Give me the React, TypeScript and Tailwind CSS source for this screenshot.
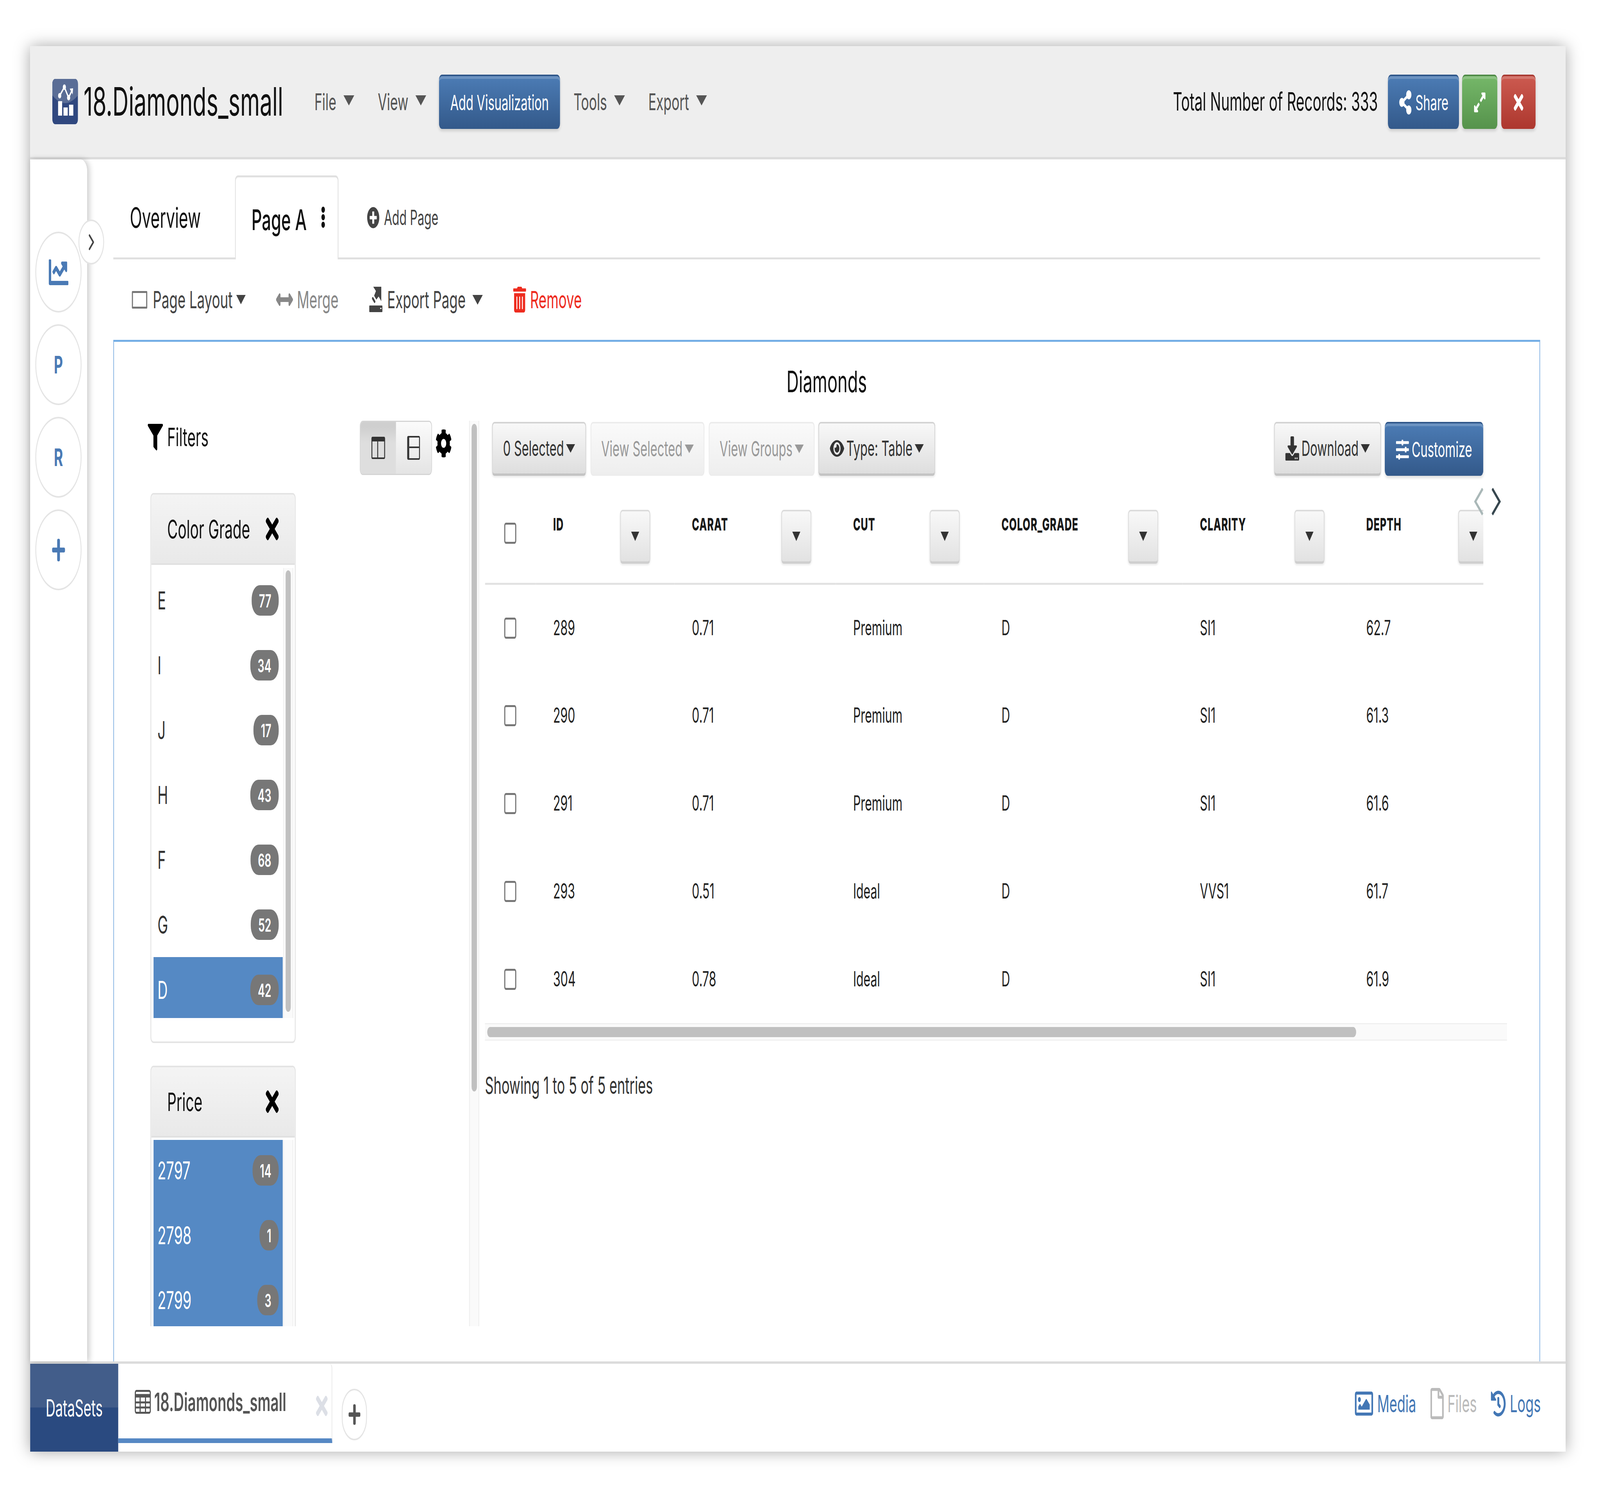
import React, { useState } from "react";
import { ChevronRight } from "lucide-react";
import {
  FaChartLine,
  FaCog,
  FaDownload,
  FaEllipsisV,
  FaEye,
  FaFilter,
  FaHistory,
  FaPlus,
  FaPlusCircle,
  FaRegFile,
  FaRegImage,
  FaShareAlt,
  FaSlidersH,
  FaTimes,
  FaTrashAlt,
  FaExpandAlt,
  FaArrowsAltH,
} from "react-icons/fa";

const font = "font-['Inter','Liberation_Sans',sans-serif]";

function Caret({ className }: { className: string }) {
  return <span className={`inline-block h-0 w-0 border-x-transparent border-t-current ${className}`} />;
}

function Logo() {
  return (
    <svg viewBox="0 0 115 116" className="h-[116px] w-[115px] shrink-0">
      <rect width="115" height="116" rx="13" fill="#30487f" />
      <path d="M0 42 Q57 82 115 42 V13 A13 13 0 0 0 102 0 H13 A13 13 0 0 0 0 13Z" fill="#5a6d96" />
      <path d="M33 43 L54 21 L73 48 L90 27" fill="none" stroke="#fff" strokeWidth="5" />
      <circle cx="33" cy="43" r="7" fill="#fff" />
      <circle cx="54" cy="21" r="7" fill="#fff" />
      <circle cx="73" cy="48" r="7" fill="#fff" />
      <path d="M78 25 L93 24 L91 40Z" fill="#fff" />
      <rect x="26" y="57" width="18" height="37" fill="#fff" />
      <rect x="50" y="73" width="19" height="21" fill="#fff" />
      <rect x="75" y="66" width="19" height="28" fill="#fff" />
    </svg>
  );
}

function ExportIcon() {
  return (
    <svg viewBox="43 34 60 66" className="ml-[138px] h-[66px] w-[60px]" fill="#444">
      <path d="M61 34 H97 V71 L85 59 L75 67 L65 57 L73 45Z" />
      <path d="M59 64 L67 72" stroke="#444" strokeWidth="7" strokeLinecap="round" />
      <rect x="43" y="82" width="59" height="17" rx="2" />
      <rect x="92" y="88" width="6" height="3" fill="#fff" />
    </svg>
  );
}

function TableIcon() {
  return (
    <svg viewBox="0 0 72 61" className="mr-[15px] h-[61px] w-[72px] shrink-0" fill="none" stroke="#555" strokeWidth="5">
      <rect x="2.5" y="2.5" width="67" height="56" rx="5" />
      <path d="M2 15 H70" strokeWidth="9" />
      <path d="M2 32 H70 M2 45 H70 M24 15 V58 M48 15 V58" />
    </svg>
  );
}

function MenuItem({ label, className }: { label: string; className: string }) {
  return (
    <div className={`flex items-center text-[59px] leading-none text-[#555] ${className}`}>
      {label}
      <Caret className="ml-[32px] mb-[6px] border-x-[24px] border-t-[26px]" />
    </div>
  );
}

const raised = "shadow-[inset_0_7px_0_rgba(255,255,255,0.18),0_6px_8px_rgba(0,0,0,0.12)]";
const blueBtn = `rounded-[14px] border-t-[4px] border-[#30578a] bg-linear-to-b from-[#4c7cb5] to-[#33598a] text-white ${raised}`;

function HeaderBar() {
  return (
    <div className="flex h-[290px] shrink-0 items-center border-b-[6px] border-[#dcdcdc] bg-[#eeeeee] pl-[99px] pr-[134px]">
      <Logo />
      <div className="ml-[25px] text-[100px] leading-none text-[#111]">18.Diamonds_small</div>
      <MenuItem label="File" className="ml-[140px]" />
      <MenuItem label="View" className="ml-[106px]" />
      <button className={`ml-[57px] h-[139px] w-[542px] text-[54px] ${blueBtn}`}>Add Visualization</button>
      <MenuItem label="Tools" className="ml-[60px]" />
      <MenuItem label="Export" className="ml-[105px]" />
      <div className="ml-auto text-[64.5px] leading-none text-[#111]">Total Number of Records: 333</div>
      <button className={`ml-[45px] flex h-[139px] w-[318px] items-center justify-center gap-[14px] text-[54px] ${blueBtn}`}>
        <FaShareAlt className="h-[62px] w-[62px]" />
        Share
      </button>
      <button className={`ml-[14px] flex h-[139px] w-[158px] items-center justify-center rounded-[14px] border-t-[4px] border-[#4f8a47] bg-linear-to-b from-[#75b769] to-[#56934c] text-white ${raised}`}>
        <FaExpandAlt className="h-[58px] w-[58px]" />
      </button>
      <button className={`ml-[17px] flex h-[139px] w-[154px] items-center justify-center rounded-[14px] border-t-[4px] border-[#a83a32] bg-linear-to-b from-[#cc5a50] to-[#ad372e] text-white ${raised}`}>
        <FaTimes className="h-[62px] w-[43px]" />
      </button>
    </div>
  );
}

function SideCircle({ children }: { children: React.ReactNode }) {
  return (
    <div className="flex h-[207px] w-[207px] items-center justify-center rounded-full border-[4px] border-[#e4e4e4] bg-white text-[62px] font-bold text-[#4a7ab5]">
      {children}
    </div>
  );
}

function Sidebar() {
  return (
    <div className="relative z-10 flex w-[255px] shrink-0 flex-col items-start gap-[30px] rounded-tr-[30px] bg-white pl-[23px] pt-[185px] shadow-[8px_0_20px_rgba(0,0,0,0.22)]">
      <SideCircle>
        <FaChartLine className="h-[88px] w-[88px]" />
      </SideCircle>
      <SideCircle>P</SideCircle>
      <SideCircle>R</SideCircle>
      <SideCircle>
        <FaPlus className="h-[66px] w-[66px]" />
      </SideCircle>
      <div className="absolute left-[216px] top-[154px] flex h-[115px] w-[115px] items-center justify-center rounded-full border-[4px] border-[#e4e4e4] bg-white text-[#444]">
        <ChevronRight className="h-[70px] w-[70px]" strokeWidth={2} />
      </div>
    </div>
  );
}

function PageTabs() {
  return (
    <div className="flex h-[256px] items-end border-b-[5px] border-[#e0e0e0] pl-[74px]">
      <div className="flex h-[210px] w-[470px] items-center pt-[6px] text-[71px] leading-none text-[#111]">Overview</div>
      <div className="-mb-[5px] flex h-[215px] w-[464px] items-center rounded-t-[14px] border-x-[4px] border-t-[5px] border-[#e0e0e0] bg-white pt-[6px] pl-[70px] text-[73px] font-medium leading-none text-[#111]">
        Page A
        <FaEllipsisV className="ml-[46px] mb-[12px] h-[56px] w-[56px]" />
      </div>
      <div className="ml-[127px] flex h-[210px] items-center gap-[20px] pt-[6px] text-[53px] leading-none text-[#444]">
        <FaPlusCircle className="h-[56px] w-[56px]" />
        Add Page
      </div>
    </div>
  );
}

function PageToolbar() {
  return (
    <div className="flex h-[206px] items-center pl-[83px] text-[61px] leading-none text-[#444]">
      <span className="h-[45px] w-[69px] rounded-[3px] border-[5px] border-[#777]" />
      <span className="ml-[25px]">Page Layout</span>
      <Caret className="ml-[16px] border-x-[21px] border-t-[24px]" />
      <FaArrowsAltH className="ml-[136px] h-[76px] w-[76px] text-[#888]" />
      <span className="ml-[18px] text-[#888]">Merge</span>
      <ExportIcon />
      <span className="ml-[20px]">Export Page</span>
      <Caret className="ml-[30px] border-x-[23px] border-t-[25px]" />
      <FaTrashAlt className="ml-[136px] h-[66px] w-[58px] text-[#ee2c1f]" />
      <span className="ml-[18px] text-[#ee2c1f]">Remove</span>
    </div>
  );
}

function FilterCard({
  title,
  rows,
  selected,
  allSelected,
  scroll,
}: {
  title: string;
  rows: [string, number][];
  selected?: string;
  allSelected?: boolean;
  scroll?: boolean;
}) {
  return (
    <div className="w-[650px] shrink-0 rounded-[14px] border-[4px] border-[#e4e4e4] bg-white">
      <div className="flex h-[180px] items-center justify-between rounded-t-[12px] border-b-[4px] border-[#e0e0e0] bg-linear-to-b from-[#f4f4f4] to-[#e9e9e9] pl-[71px] pr-[72px] text-[65px] leading-none text-[#111]">
        {title}
        <FaTimes className="h-[84px] w-[58px] text-black" />
      </div>
      <div className={`flex pb-[60px] pl-[10px] pr-[7px] ${allSelected ? "pt-[6px]" : "pt-[8px]"}`}>
        <div className={`flex w-[578px] flex-col ${allSelected ? "bg-[#5589c4]" : ""}`}>
          {rows.map(([label, count]) => {
            const isPicked = label === selected;
            return (
              <div
                key={label}
                className={`flex items-center justify-between px-[18px] text-[63px] leading-none ${
                  isPicked ? "h-[156px] bg-[#5589c4] pt-[12px] text-white" : "h-[166px]"
                } ${allSelected ? "pb-[10px] text-white" : ""} ${!allSelected && !isPicked ? "text-[#333]" : ""}`}
              >
                {label}
                <span className="flex h-[78px] items-center justify-center rounded-[36px] bg-[#777] px-[33px] text-[47px] font-semibold leading-none text-white">
                  {count}
                </span>
              </div>
            );
          })}
        </div>
        <div className="ml-[2px] w-[45px] border-x-[3px] border-[#eeeeee] bg-[#fafafa]">
          {scroll && <div className="mx-auto mt-[6px] h-[calc(100%-22px)] w-[23px] rounded-full bg-[#c0c0c0]" />}
        </div>
      </div>
    </div>
  );
}

function FiltersColumn() {
  return (
    <div className="h-[2318px] w-[1589px] shrink-0 overflow-hidden pl-[163px]">
      <div className="flex h-[185px] items-start">
        <div className="-ml-[12px] mt-[8px] flex shrink-0 items-center gap-[19px] text-[64px] leading-none text-[#111]">
          <FaFilter className="h-[68px] w-[68px] text-black" />
          Filters
        </div>
        <div className="ml-auto flex h-[139px] w-[323px] shrink-0 rounded-[14px] border-[3px] border-[#d4d4d4] bg-white">
          <div className="flex flex-1 items-center justify-center rounded-l-[11px] bg-linear-to-b from-[#cfcfcf] to-[#dedede] from-10% to-40%">
            <span className="flex h-[57px] w-[61px] rounded-[5px] border-[4px] border-t-[12px] border-[#333]">
              <span className="h-full w-1/2 border-r-[4px] border-[#333]" />
            </span>
          </div>
          <div className="flex flex-1 items-center justify-center rounded-r-[11px] bg-linear-to-b from-[#fbfbfb] to-[#e4e4e4]">
            <span className="flex h-[61px] w-[57px] flex-col rounded-[5px] border-[4px] border-l-[9px] border-[#333]">
              <span className="h-1/2 w-full border-b-[4px] border-[#333]" />
            </span>
          </div>
        </div>
        <FaCog className="ml-[15px] mr-[77px] mt-[21px] h-[74px] w-[74px] shrink-0 text-black" />
      </div>
      <div className="flex flex-col gap-[58px]">
        <FilterCard
          title="Color Grade"
          scroll
          selected="D"
          rows={[
            ["E", 77],
            ["I", 34],
            ["J", 17],
            ["H", 43],
            ["F", 68],
            ["G", 52],
            ["D", 42],
          ]}
        />
        <FilterCard
          title="Price"
          allSelected
          rows={[
            ["2797", 14],
            ["2798", 1],
            ["2799", 3],
          ]}
        />
      </div>
    </div>
  );
}

function GrayButton({
  children,
  disabled,
  className,
}: {
  children: React.ReactNode;
  disabled?: boolean;
  className: string;
}) {
  return (
    <button
      className={`flex h-[138px] shrink-0 items-center justify-center gap-[10px] rounded-[12px] border-[4px] bg-linear-to-b text-[54px] leading-none ${className} ${
        disabled
          ? "border-[#ececec] from-[#fafafa] to-[#eeeeee] text-[#999]"
          : "border-[#d4d4d4] border-b-[6px] border-b-[#c4c4c4] from-[#f8f8f8] to-[#dedede] text-[#333] shadow-[0_4px_6px_rgba(0,0,0,0.08)]"
      }`}
    >
      {children}
    </button>
  );
}

const columns = ["ID", "CARAT", "CUT", "COLOR_GRADE", "CLARITY", "DEPTH"];
const tableRows = [
  ["289", "0.71", "Premium", "D", "SI1", "62.7"],
  ["290", "0.71", "Premium", "D", "SI1", "61.3"],
  ["291", "0.71", "Premium", "D", "SI1", "61.6"],
  ["293", "0.51", "Ideal", "D", "VVS1", "61.7"],
  ["304", "0.78", "Ideal", "D", "SI1", "61.9"],
];

function Checkbox() {
  return <span className="block h-[54px] w-[54px] rounded-[8px] border-[5px] border-[#777] bg-white" />;
}

function DataTable() {
  return (
    <div className="mt-[62px] w-[4467px] overflow-hidden">
      <table className="w-[4598px] table-fixed border-collapse">
        <colgroup>
          <col className="w-[227px]" />
          <col className="w-[621px]" />
          <col className="w-[721px]" />
          <col className="w-[664px]" />
          <col className="w-[888px]" />
          <col className="w-[744px]" />
          <col className="w-[733px]" />
        </colgroup>
        <thead>
          <tr className="h-[214px] border-b-[5px] border-[#e2e2e2]">
            <th className="pl-[86px] pt-[58px] text-left align-top">
              <Checkbox />
            </th>
            {columns.map((col) => (
              <th key={col} className="pl-[78px] text-left align-top">
                <div className="flex justify-between pr-[108px] pt-[25px]">
                  <span className="pt-[15px] text-[44px] font-extrabold leading-none tracking-[1.5px] text-[#1a1a1a]">{col}</span>
                  <span className="flex h-[138px] w-[136px] shrink-0 items-center justify-center rounded-[12px] border-[4px] border-[#dcdcdc] border-b-[6px] border-b-[#cfcfcf] bg-linear-to-b from-[#f8f8f8] to-[#e2e2e2] text-[#333] shadow-[0_4px_6px_rgba(0,0,0,0.08)]">
                    <Caret className="border-x-[18px] border-t-[24px]" />
                  </span>
                </div>
              </th>
            ))}
          </tr>
        </thead>
        <tbody>
          {tableRows.map((row) => (
            <tr key={row[0]} className="h-[225px]">
              <td className="pl-[86px]">
                <Checkbox />
              </td>
              {row.map((cell, i) => (
                <td key={i} className="pl-[78px] text-[53px] leading-none text-[#222]">
                  {cell}
                </td>
              ))}
            </tr>
          ))}
        </tbody>
      </table>
    </div>
  );
}

function TablePane() {
  return (
    <div className="relative ml-[26px] h-[2318px] w-[4573px] shrink-0">
      <div className="flex w-[4467px] pt-[3px]">
        <GrayButton className="ml-[31px] w-[422px]">
          0 Selected
          <Caret className="border-x-[20px] border-t-[22px]" />
        </GrayButton>
        <GrayButton disabled className="ml-[19px] w-[510px]">
          View Selected
          <Caret className="border-x-[20px] border-t-[22px]" />
        </GrayButton>
        <GrayButton disabled className="ml-[19px] w-[474px]">
          View Groups
          <Caret className="border-x-[20px] border-t-[22px]" />
        </GrayButton>
        <GrayButton className="ml-[16px] w-[524px]">
          <FaEye className="h-[64px] w-[64px]" />
          Type: Table
          <Caret className="border-x-[20px] border-t-[22px]" />
        </GrayButton>
        <GrayButton className="ml-auto w-[480px]">
          <FaDownload className="h-[62px] w-[62px]" />
          Download
          <Caret className="border-x-[20px] border-t-[22px]" />
        </GrayButton>
        <button className={`ml-[16px] flex h-[138px] w-[441px] items-center justify-center gap-[12px] text-[54px] leading-none ${blueBtn}`}>
          <FaSlidersH className="h-[58px] w-[58px]" />
          Customize
        </button>
      </div>
      <svg viewBox="0 0 42 70" className="absolute left-[4426px] top-[172px] h-[70px] w-[42px]" fill="none" stroke="#aab8b8" strokeWidth="8">
        <path d="M38 2 L5 35 L38 68" />
      </svg>
      <svg viewBox="0 0 42 70" className="absolute left-[4503px] top-[172px] h-[70px] w-[42px]" fill="none" stroke="#37474f" strokeWidth="8">
        <path d="M4 2 L37 35 L4 68" />
      </svg>
      <DataTable />
      <div className="flex h-[45px] w-[4573px] items-center border-y-[3px] border-[#f0f0f0] bg-[#fafafa] pl-[10px]">
        <div className="h-[26px] w-[3888px] rounded-full bg-[#c0c0c0]" />
      </div>
      <div className="mt-[84px] text-[60px] leading-none text-[#333]">Showing 1 to 5 of 5 entries</div>
    </div>
  );
}

function Panel() {
  return (
    <div className="h-[2615px] overflow-hidden border-x-[3px] border-t-[5px] border-x-[#7fb0e2] border-t-[#74aee5] bg-white">
      <div className="flex h-[202px] items-center justify-center text-[76px] leading-none text-[#111]">Diamonds</div>
      <div className="flex">
        <FiltersColumn />
        <div className="h-[2318px] w-[45px] shrink-0 border-x-[3px] border-[#ececec] bg-[#fafafa]">
          <div className="mx-auto mt-[8px] h-[1709px] w-[24px] rounded-full bg-[#c0c0c0]" />
        </div>
        <TablePane />
      </div>
    </div>
  );
}

function Footer() {
  return (
    <div className="flex h-[231px] shrink-0 border-t-[6px] border-[#dcdcdc] bg-white">
      <div className="flex w-[394px] items-center justify-center bg-linear-to-b from-[#425d8a] from-50% to-[#2a4a80] to-50% text-[60px] leading-none text-white">
        DataSets
      </div>
      <div className="relative flex h-[203px] w-[958px] items-center rounded-tr-[12px] border-r-[3px] border-b-[12px] border-r-[#e4e4e4] border-b-[#5688c4] pl-[74px] pt-[4px] text-[64px] font-semibold leading-none text-[#555]">
        <TableIcon />
        18.Diamonds_small
        <FaTimes className="absolute right-[18px] top-[70px] h-[76px] w-[52px] text-[#dcdfe6]" />
      </div>
      <div className="ml-[42px] mt-[64px] flex h-[132px] w-[113px] items-center justify-center rounded-full border-[4px] border-[#e4e4e4] text-[#555]">
        <FaPlus className="h-[60px] w-[60px]" />
      </div>
      <div className="ml-auto mr-[111px] flex items-center pb-[22px] text-[60px] leading-none text-[#4377b5]">
        <FaRegImage className="mr-[18px] h-[82px] w-[82px]" />
        Media
        <FaRegFile className="ml-[64px] mr-[16px] h-[80px] w-[60px] text-[#bbb]" />
        <span className="text-[#bbb]">Files</span>
        <FaHistory className="ml-[62px] mr-[18px] h-[68px] w-[68px]" />
        Logs
      </div>
    </div>
  );
}

export default function App() {
  // the browser may cap the window below the design width, so fit it horizontally
  const [ratio] = useState(() => Math.min(1, window.innerWidth / 7159));

  return (
    <div className="h-[3827px] w-full overflow-hidden bg-white">
      <div
        className={`h-[3827px] w-[7159px] origin-top-left bg-white pl-[135px] pt-[118px] ${font}`}
        style={{ transform: `scaleX(${ratio})` }}
      >
        <div className="flex h-[3598px] w-[6870px] flex-col bg-white shadow-[0_0_50px_rgba(0,0,0,0.35)]">
          <HeaderBar />
          <div className="flex min-h-0 flex-1">
            <Sidebar />
            <div className="min-w-0 flex-1 pl-[117px] pr-[114px]">
              <PageTabs />
              <PageToolbar />
              <Panel />
            </div>
          </div>
          <Footer />
        </div>
      </div>
    </div>
  );
}
